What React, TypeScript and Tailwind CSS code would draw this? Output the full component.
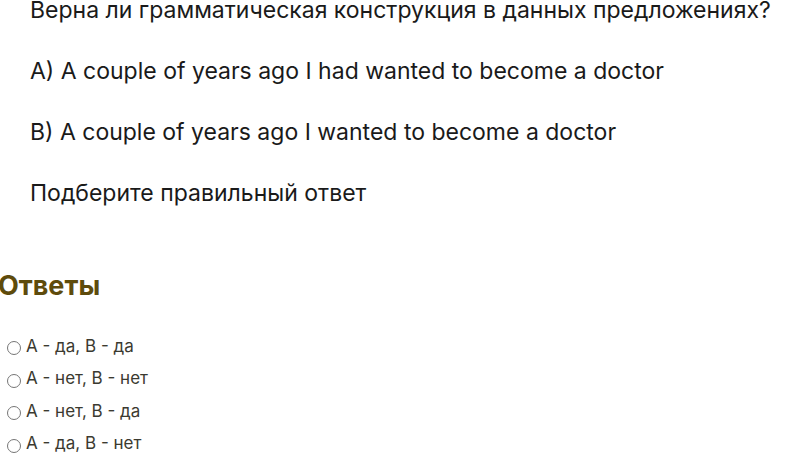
export default function App() {
  const answers = ['А - да, В - да', 'А - нет, В - нет', 'А - нет, В - да', 'А - да, В - нет'];
  return (
    <div className="h-[453px] w-[786px] overflow-hidden bg-white" style={{ fontFamily: 'Inter, sans-serif' }}>
      <div className="-mt-[8px] pl-[30px] text-[23px] leading-[36px] text-[#1a1a1a]">
        <p className="mb-[25px]">Верна ли грамматическая конструкция в данных предложениях?</p>
        <p className="mb-[25px]">A) A couple of years ago I had wanted to become a doctor</p>
        <p className="mb-[25px]">B) A couple of years ago I wanted to become a doctor</p>
        <p>Подберите правильный ответ</p>
      </div>
      <h2 className="-ml-[2px] mt-[57px] text-[27px] font-bold leading-[36px] text-[#5e4b0c]">Ответы</h2>
      <ul className="mt-[26px] pl-[7px] text-[17px] text-[#3b3a30]">
        {answers.map((a) => (
          <li key={a} className="flex h-[32.6px] items-center gap-[5px]">
            <span className="mt-[4px] h-[14px] w-[14px] shrink-0 rounded-full border border-[#767676]" />
            <span>{a}</span>
          </li>
        ))}
      </ul>
    </div>
  );
}
